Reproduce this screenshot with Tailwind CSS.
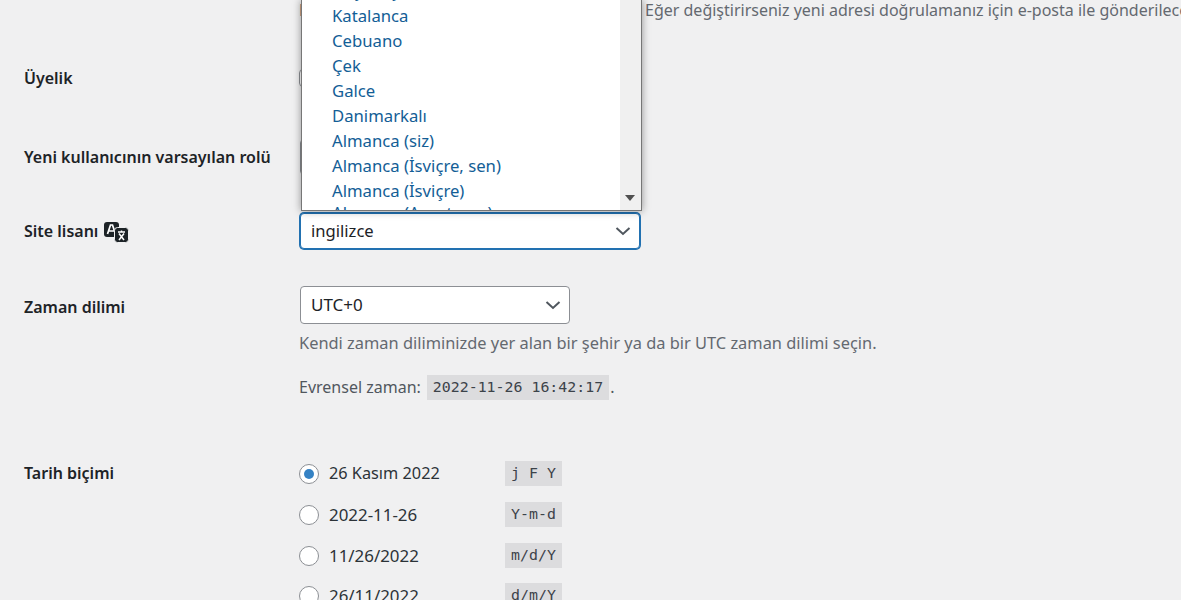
<!DOCTYPE html>
<html lang="tr">
  <head>
    <meta charset="UTF-8" />
    <title>Genel ayarlar</title>
    <script src="https://cdn.jsdelivr.net/npm/@tailwindcss/browser@4"></script>
  </head>
  <body class="bg-[#f0f0f1] text-[#1d2327] font-['Noto_Sans',sans-serif] text-[16px] h-[600px] overflow-hidden relative">
    <main class="pl-6 flex flex-col">
      <!-- yonetici e-posta, scrolled off the top -->
      <div class="flex h-[44px] pl-[275px] items-center -mt-[12px]">
        <p class="text-[#646970] text-[16px] whitespace-nowrap"><span class="inline-block w-[346px] overflow-hidden align-bottom">Bu adres yönetim amaçlı kullanılır.</span>Eğer değiştirirseniz yeni adresi doğrulamanız için e-posta ile gönderilecek</p>
      </div>

      <div class="flex items-center h-[40px] mt-[26px] font-semibold">
        <div class="w-[275px]">Üyelik</div>
        <span class="w-4 h-[18px] bg-white border border-[#8c8f94] rounded-[4px]"></span>
      </div>

      <div class="flex items-center h-[40px] mt-[39px] font-semibold">
        <div class="w-[275px]">Yeni kullanıcının varsayılan rolü</div>
        <span class="w-[60px] h-[36px] ml-px bg-white border border-[#8c8f94] rounded-[4px]"></span>
      </div>

      <div class="flex items-center h-[38px] mt-[35px]">
        <div class="w-[275px] font-semibold flex items-center gap-[6px]">
          Site lisanı
          <svg class="mt-[3px]" width="25" height="21" viewBox="0 0 25 21">
            <rect x="0" y="0" width="15" height="15" rx="3" fill="#1d2327" />
            <path d="M3.500 12l3-9h2l3 9M5 9h5" fill="none" stroke="#fff" stroke-width="1.700" />
            <rect x="10.500" y="5.500" width="14" height="15" rx="3" fill="#1d2327" stroke="#f0f0f1" />
            <path d="M14 10h7M17.500 8.500v2M15 18l5-6.500M20 18l-5-6.500" fill="none" stroke="#fff" stroke-width="1.500" />
          </svg>
        </div>
        <div class="w-[340px] h-[36px] ml-px bg-white border border-[#2271b1] ring-1 ring-[#2271b1] rounded-[4px] flex items-center justify-between pl-[10px] pr-[8px]">
          <span class="text-[16.6px]">ingilizce</span>
          <svg width="16" height="16" viewBox="0 0 16 16"><path d="M1.500 5L8 11l6.500-6" fill="none" stroke="#50575e" stroke-width="2" /></svg>
        </div>
      </div>

      <div class="flex mt-[36px]">
        <div class="w-[275px] font-semibold leading-[42px]">Zaman dilimi</div>
        <div class="flex flex-col">
          <div class="w-[270px] h-[38px] ml-px bg-white border border-[#8c8f94] rounded-[4px] flex items-center justify-between pl-[10px] pr-[8px]">
            <span class="text-[17px]">UTC+0</span>
            <svg width="16" height="16" viewBox="0 0 16 16"><path d="M1.500 5L8 11l6.500-6" fill="none" stroke="#50575e" stroke-width="2" /></svg>
          </div>
          <p class="text-[#646970] text-[16.4px] mt-[7px] leading-[24px]">Kendi zaman diliminizde yer alan bir şehir ya da bir UTC zaman dilimi seçin.</p>
          <p class="text-[#50575e] mt-[19px] leading-[26px] flex items-center">
            Evrensel zaman:
            <code class="font-['DejaVu_Sans_Mono',monospace] text-[14.9px] bg-[#dcdcde] text-[#3c434a] px-[6px] ml-[6px] h-[25px] leading-[25px]">2022-11-26 16:42:17</code>
            <span class="ml-px">.</span>
          </p>
        </div>
      </div>

      <div class="flex mt-[61px]">
        <div class="w-[275px] font-semibold leading-[25px]">Tarih biçimi</div>
        <div class="flex flex-col gap-[16px]">
          <div class="flex items-center h-[25px]">
            <span class="w-5 h-5 rounded-full bg-white border border-[#8c8f94] flex items-center justify-center"><span class="w-[10px] h-[10px] rounded-full bg-[#3582c4]"></span></span>
            <span class="w-[186px] pl-[10px] text-[16.3px] text-[#2c3338]">26 Kasım 2022</span>
            <code class="font-['DejaVu_Sans_Mono',monospace] text-[14.9px] bg-[#dcdcde] text-[#3c434a] w-[57px] h-[25px] leading-[25px] text-center whitespace-pre">j F Y</code>
          </div>
          <div class="flex items-center h-[25px]">
            <span class="w-5 h-5 rounded-full bg-white border border-[#8c8f94]"></span>
            <span class="w-[186px] pl-[10px] text-[16.900px] text-[#2c3338]">2022-11-26</span>
            <code class="font-['DejaVu_Sans_Mono',monospace] text-[14.9px] bg-[#dcdcde] text-[#3c434a] w-[57px] h-[25px] leading-[25px] text-center">Y-m-d</code>
          </div>
          <div class="flex items-center h-[25px]">
            <span class="w-5 h-5 rounded-full bg-white border border-[#8c8f94]"></span>
            <span class="w-[186px] pl-[10px] text-[16.900px] text-[#2c3338]">11/26/2022</span>
            <code class="font-['DejaVu_Sans_Mono',monospace] text-[14.9px] bg-[#dcdcde] text-[#3c434a] w-[57px] h-[25px] leading-[25px] text-center">m/d/Y</code>
          </div>
          <div class="flex items-center h-[25px] -mt-px">
            <span class="w-5 h-5 rounded-full bg-white border border-[#8c8f94]"></span>
            <span class="w-[186px] pl-[10px] text-[16.900px] text-[#2c3338]">26/11/2022</span>
            <code class="font-['DejaVu_Sans_Mono',monospace] text-[14.9px] bg-[#dcdcde] text-[#3c434a] w-[57px] h-[25px] leading-[25px] text-center">d/m/Y</code>
          </div>
        </div>
      </div>
    </main>

    <!-- open language list, lies over the page -->
    <div class="absolute left-[301px] top-0 w-[341px] h-[211px] bg-white border border-t-0 border-[#767676] shadow-[0_0_8px_rgba(0,0,0,0.4)] overflow-hidden flex">
      <ul class="flex-1 pl-[30px] text-[16.7px] text-[#135e96] leading-[25px] -mt-[22px]">
        <li>Boşnakça</li>
        <li>Katalanca</li>
        <li>Cebuano</li>
        <li>Çek</li>
        <li>Galce</li>
        <li>Danimarkalı</li>
        <li>Almanca (siz)</li>
        <li>Almanca (İsviçre, sen)</li>
        <li>Almanca (İsviçre)</li>
        <li class="-mt-[3px]">Almanca (Avusturya)</li>
      </ul>
      <div class="w-[21px] bg-[#f0f0f0] relative">
        <svg class="absolute left-[5px] bottom-[9px]" width="10" height="6" viewBox="0 0 10 6"><path d="M0 0h10L5 6z" fill="#505050" /></svg>
      </div>
    </div>
  </body>
</html>
